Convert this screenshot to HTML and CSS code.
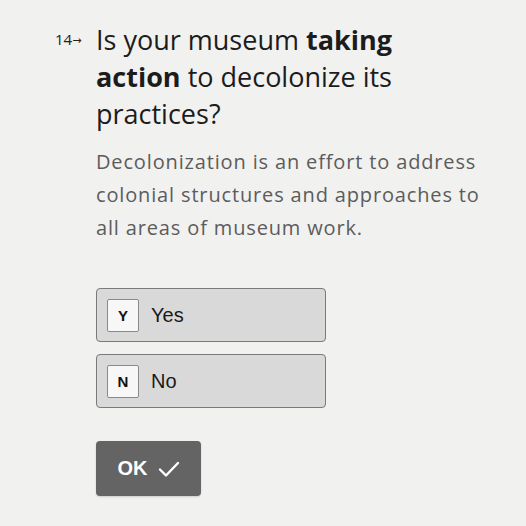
FILE: index.html
```html
<!DOCTYPE html>
<html>
<head>
<meta charset="utf-8">
<link rel="stylesheet" href="styles.css">
</head>
<body>
<div class="page">
  <div class="question">
    <div class="num">14<span class="arrow">&#8594;</span></div>
    <div class="body">
      <h1 class="title">Is your museum <b>taking action</b> to decolonize its practices?</h1>
      <p class="desc">Decolonization is an effort to address colonial structures and approaches to all areas of museum work.</p>
      <div class="choices">
        <div class="choice"><span class="key">Y</span><span class="label">Yes</span></div>
        <div class="choice"><span class="key">N</span><span class="label">No</span></div>
      </div>
      <button class="ok">OK
        <svg class="check" width="22" height="18" viewBox="0 0 22 18"><path d="M2 9.5 L8 15.5 L20 3" fill="none" stroke="#fff" stroke-width="2.4" stroke-linecap="round" stroke-linejoin="round"/></svg>
      </button>
    </div>
  </div>
</div>
</body>
</html>
```
FILE: styles.css
```css
html, body {
  margin: 0;
  padding: 0;
  background: #f1f1f0;
}
.page {
  width: 526px;
  height: 526px;
  padding-top: 21px;
  box-sizing: border-box;
  font-family: "Open Sans", "DejaVu Sans", sans-serif;
  color: #1a1a1a;
}
.question {
  display: flex;
}
.num {
  width: 41px;
  padding-left: 55px;
  box-sizing: content-box;
  font-size: 15px;
  line-height: 37px;
  color: #222;
  flex: none;
}
.arrow {
  font-size: 11px;
  position: relative;
  top: -1px;
}
.body {
  width: 410px;
}
.title {
  margin: 0;
  font-size: 27px;
  font-weight: 400;
  line-height: 37px;
  width: 305px;
  color: #1c1c1c;
}
.title b {
  font-weight: 700;
}
.desc {
  margin: 13px 0 0;
  font-size: 20px;
  letter-spacing: 0.85px;
  line-height: 33px;
  color: #5c5c5c;
  width: 395px;
}
.choices {
  margin-top: 44px;
  display: flex;
  flex-direction: column;
  gap: 12px;
}
.choice {
  width: 230px;
  height: 54px;
  box-sizing: border-box;
  border: 1px solid #7a7a7a;
  border-radius: 4px;
  background: #d9d9d9;
  display: flex;
  align-items: center;
  padding-left: 10px;
}
.key {
  width: 32px;
  height: 33px;
  box-sizing: border-box;
  border: 1px solid #8a8a8a;
  border-radius: 2px;
  background: #f7f7f7;
  display: flex;
  align-items: center;
  justify-content: center;
  font-family: "Liberation Sans", Arial, sans-serif;
  font-weight: 700;
  font-size: 15px;
  color: #111;
}
.label {
  margin-left: 12px;
  font-family: "Liberation Sans", Arial, sans-serif;
  font-size: 20px;
  color: #1a1a1a;
}
.ok {
  margin-top: 33px;
  width: 105px;
  height: 55px;
  border: none;
  border-radius: 4px;
  background: #646464;
  color: #fff;
  font-family: "Liberation Sans", Arial, sans-serif;
  font-weight: 700;
  font-size: 20px;
  display: flex;
  align-items: center;
  justify-content: center;
  gap: 10px;
  padding: 0;
  box-shadow: 0 1px 2px rgba(0,0,0,0.15);
}
.check {
  display: block;
}
```
